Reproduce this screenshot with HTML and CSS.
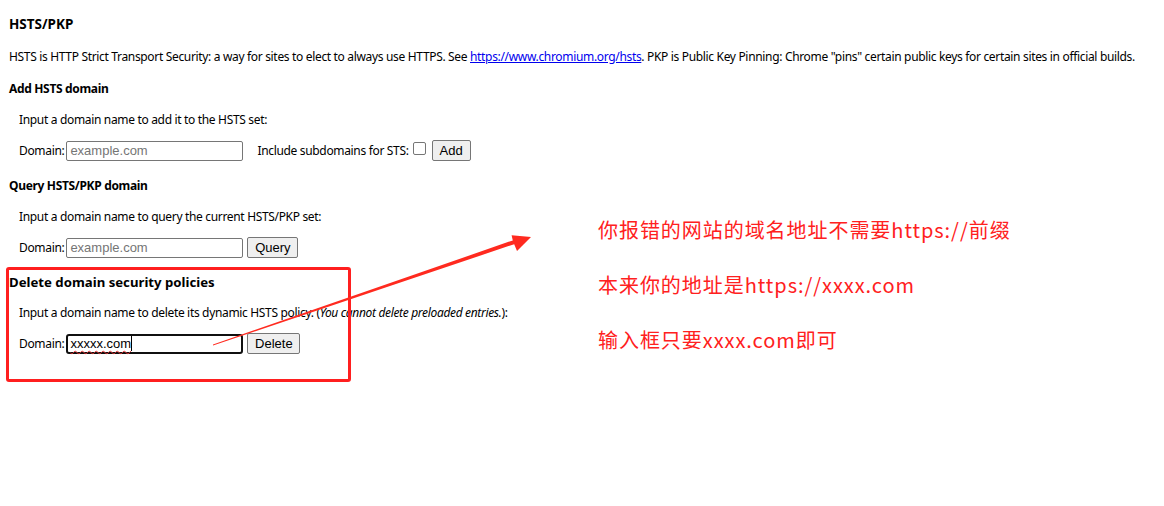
FILE: index.html
```html
<!DOCTYPE html>
<html>
<head>
<meta charset="utf-8">
<link rel="stylesheet" href="styles.css">
</head>
<body>
<main class="page">
  <h1 class="title">HSTS/PKP</h1>
  <p class="desc">HSTS is HTTP Strict Transport Security: a way for sites to elect to always use HTTPS. See <a href="#" class="link">https://www.chromium.org/hsts</a>. PKP is Public Key Pinning: Chrome "pins" certain public keys for certain sites in official builds.</p>

  <h2 class="sec">Add HSTS domain</h2>
  <div class="sub">
    <p class="hint">Input a domain name to add it to the HSTS set:</p>
    <div class="row">
      <span class="lbl">Domain:</span>
      <span class="field placeholder">example.com</span>
      <span class="lbl sts">Include subdomains for STS:</span>
      <span class="check"></span>
      <span class="btn btn-add">Add</span>
    </div>
  </div>

  <h2 class="sec sec-next">Query HSTS/PKP domain</h2>
  <div class="sub">
    <p class="hint">Input a domain name to query the current HSTS/PKP set:</p>
    <div class="row">
      <span class="lbl">Domain:</span>
      <span class="field placeholder">example.com</span>
      <span class="btn btn-query">Query</span>
    </div>
  </div>

  <h2 class="sec sec-del">Delete domain security policies</h2>
  <div class="sub">
    <p class="hint">Input a domain name to delete its dynamic HSTS policy. (<i>You cannot delete preloaded entries.</i>):</p>
    <div class="row">
      <span class="lbl">Domain:</span>
      <span class="field focused"><span class="typed">xxxxx.com</span><span class="caret"></span></span>
      <span class="btn btn-del">Delete</span>
    </div>
  </div>
</main>

<div class="note-box"></div>
<svg class="arrow" width="1164" height="506" viewBox="0 0 1164 506">
  <polygon points="213,345.5 514.2,244.2 517,251 531,237 511.6,235.2 512.8,240.4 213,344.5" fill="#ff2a1f"/>
</svg>
<div class="notes">
  <p class="note">你报错的网站的域名地址不需要https://前缀</p>
  <p class="note">本来你的地址是https://xxxx.com</p>
  <p class="note">输入框只要xxxx.com即可</p>
</div>
</body>
</html>
```
FILE: styles.css
```css
html, body {
  margin: 0;
  padding: 0;
  background: #ffffff;
}
body {
  width: 1164px;
  height: 506px;
  position: relative;
  overflow: hidden;
  font-family: "Noto Sans", "Open Sans", sans-serif;
  font-size: 12px;
  letter-spacing: -0.33px;
  color: #000;
}
.page {
  display: flex;
  flex-direction: column;
  padding: 16px 0 0 9px;
}
.title, .sec {
  margin: 0;
  font-size: 12px;
  font-weight: bold;
  line-height: 16px;
}
.title {
  font-size: 13.5px;
  letter-spacing: 0;
}
.sec-del {
  font-size: 13.2px;
  letter-spacing: 0;
}
.desc {
  margin: 17px 0 0;
  line-height: 16px;
  white-space: nowrap;
}
.link {
  color: #0000ee;
  text-decoration: underline;
}
.sec { margin-top: 16px; }
.sec-next { margin-top: 17px; }
.sub {
  display: flex;
  flex-direction: column;
  padding-left: 10px;
}
.hint {
  margin: 15px 0 0;
  line-height: 16px;
}
.row {
  display: flex;
  align-items: center;
  margin-top: 12px;
  height: 21px;
}
.lbl { line-height: 16px; }
.field {
  box-sizing: border-box;
  width: 177px;
  height: 20px;
  margin-left: 2px;
  border: 1px solid #767676;
  border-radius: 2px;
  padding: 0 3px;
  font-family: "Liberation Sans", Arial, sans-serif;
  font-size: 13px;
  letter-spacing: 0;
  line-height: 18px;
  display: flex;
  align-items: center;
}
.placeholder { color: #757575; }
.focused {
  border: 2px solid #101010;
  border-radius: 3px;
  padding: 0 2px;
  color: #000;
}
.typed {
  text-decoration: underline wavy #e03030;
  text-decoration-thickness: 1px;
  text-underline-offset: 2px;
}
.caret {
  display: inline-block;
  width: 1px;
  height: 15px;
  background: #000;
}
.sts { margin-left: 14px; }
.check {
  box-sizing: border-box;
  width: 13px;
  height: 13px;
  border: 1px solid #767676;
  border-radius: 2px;
  margin-left: 4px;
  margin-top: -5px;
}
.btn {
  box-sizing: border-box;
  height: 21px;
  background: #efefef;
  border: 1px solid #767676;
  border-radius: 2px;
  font-family: "Liberation Sans", Arial, sans-serif;
  font-size: 13px;
  letter-spacing: 0;
  line-height: 19px;
  text-align: center;
}
.btn-add { width: 39px; margin-left: 6px; }
.btn-query { width: 51px; margin-left: 4px; }
.btn-del { width: 53px; margin-left: 4px; }

.note-box {
  position: absolute;
  left: 6px;
  top: 267px;
  width: 345px;
  height: 115px;
  box-sizing: border-box;
  border: 3px solid #ff1f1f;
  border-radius: 3px;
}
.arrow {
  position: absolute;
  left: 0;
  top: 0;
}
.notes {
  position: absolute;
  left: 598px;
  top: 216px;
  display: flex;
  flex-direction: column;
  gap: 27px;
}
.note {
  margin: 0;
  font-family: "Noto Sans CJK SC", sans-serif;
  font-size: 20px;
  letter-spacing: 0.95px;
  line-height: 28px;
  color: #ff2020;
}
```
